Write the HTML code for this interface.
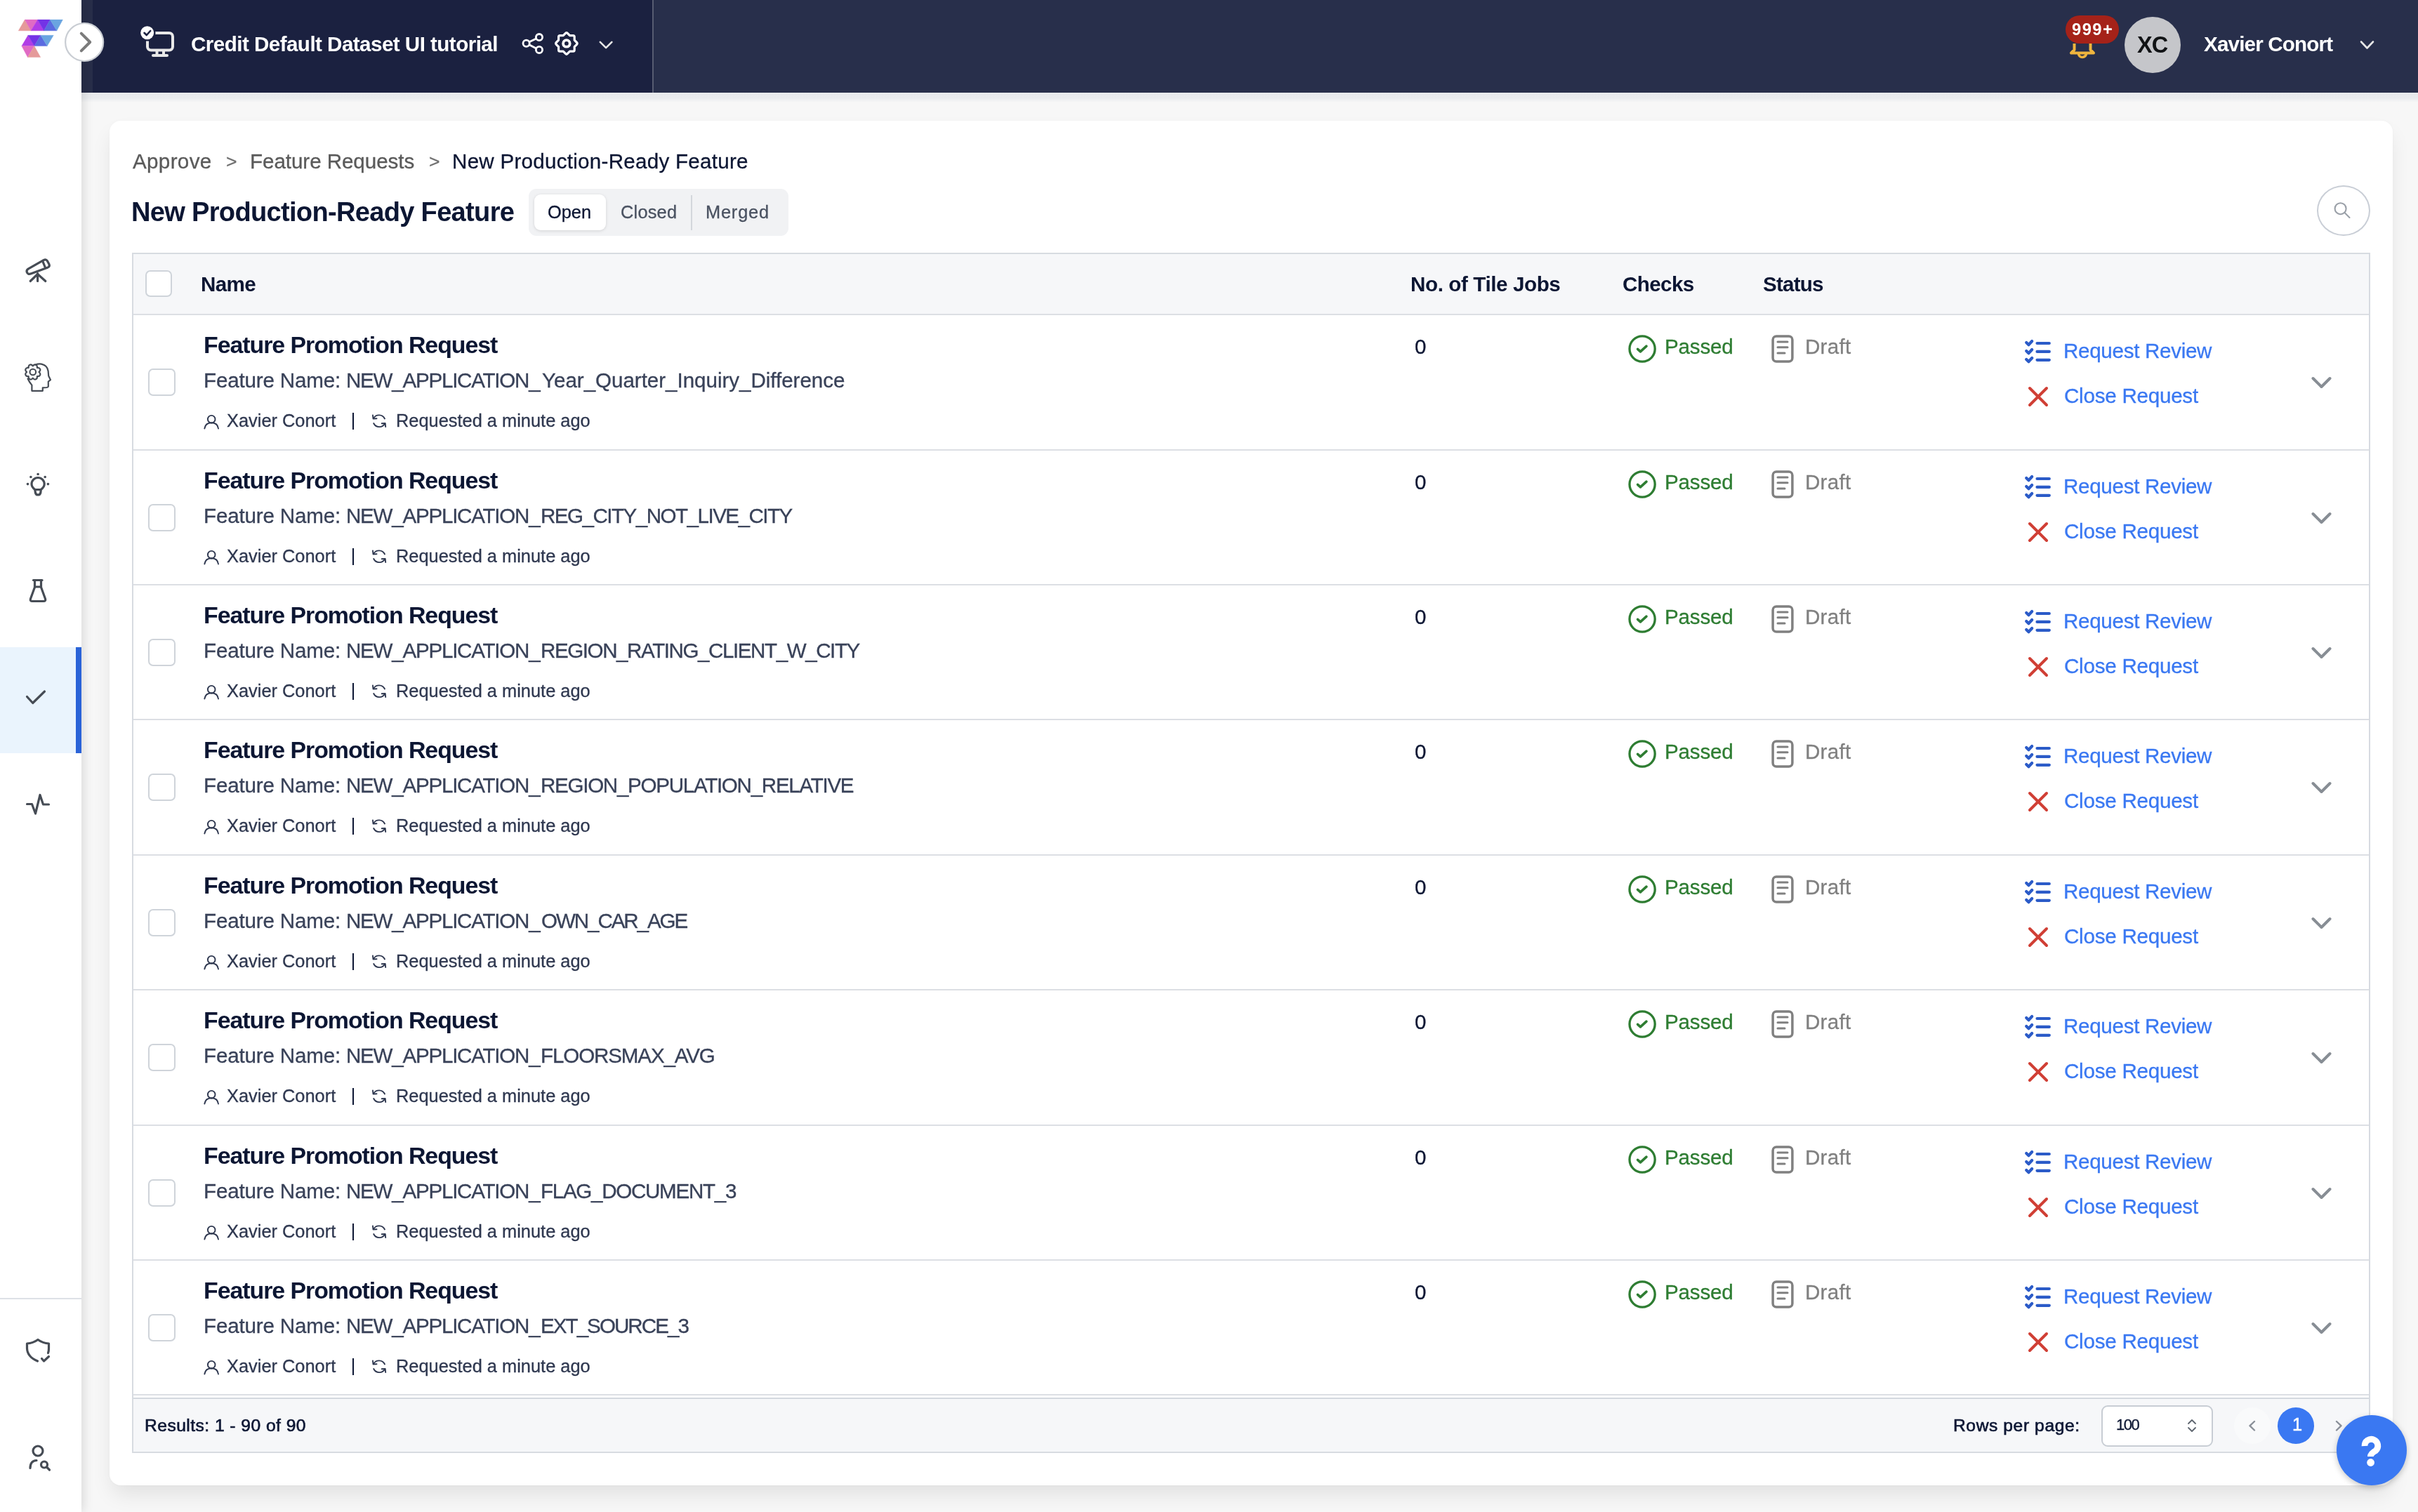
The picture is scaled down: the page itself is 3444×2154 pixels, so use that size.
<!DOCTYPE html><html><head><meta charset="utf-8"><style>
*{margin:0;padding:0;box-sizing:border-box}
html,body{width:3444px;height:2154px;overflow:hidden;background:#f7f7f7;font-family:"Liberation Sans",sans-serif}
.t{position:absolute;white-space:nowrap;will-change:transform}
.a{position:absolute}
svg{position:absolute;left:0;top:0;overflow:visible}
</style></head><body>

<div class="a" style="left:156px;top:172px;width:3252px;height:1944px;background:#fff;border-radius:16px;box-shadow:0 16px 30px -4px rgba(0,0,0,0.095),0 0 4px rgba(0,0,0,0.025)"></div>
<div class="a" style="left:116px;top:132px;width:3328px;height:16px;background:linear-gradient(180deg,#e7e9ec 0px,#e9ebee 8px,#f1f2f3 11px,#f7f7f7 14px)"></div>
<div class="a" style="left:116px;top:0;width:3328px;height:132px;background:#282f4b"></div>
<div class="a" style="left:116px;top:0;width:813px;height:132px;background:#1b2140"></div>
<div class="a" style="left:116px;top:0;width:16px;height:132px;background:#282e49"></div>
<div class="a" style="left:929px;top:0;width:2px;height:132px;background:#575c71"></div>
<div class="a" style="left:0;top:0;width:116px;height:2154px;background:#fff;box-shadow:3px 0 14px rgba(0,0,0,0.12)"></div>
<div class="a" style="left:0;top:922px;width:116px;height:151px;background:#eaf4fd"></div>
<div class="a" style="left:108px;top:922px;width:8px;height:151px;background:#2a63d8"></div>
<div class="a" style="left:0;top:1849px;width:116px;height:2px;background:#dde1e6"></div>
<div class="a" style="left:2942px;top:22px;width:76px;height:40px;border-radius:20px;background:#a52219"></div>
<div class="a" style="left:3026px;top:24px;width:80px;height:80px;border-radius:50%;background:#c5c6ca"></div>
<div class="a" style="left:753px;top:269px;width:370px;height:67px;background:#f1f2f4;border-radius:11px"></div>
<div class="a" style="left:761px;top:277px;width:102px;height:51px;background:#fff;border-radius:9px;box-shadow:0 1px 4px rgba(0,0,0,0.13)"></div>
<div class="a" style="left:984.3px;top:277.5px;width:1.6px;height:50px;background:#d3d7dc"></div>
<div class="a" style="left:3300px;top:264px;width:76px;height:72px;border:2px solid #c9ced6;border-radius:50%"></div>
<div class="a" style="left:188px;top:360px;width:3188px;height:1710px;border:2px solid #d7dbe1;background:#fff"></div>
<div class="a" style="left:190px;top:362px;width:3184px;height:85px;background:#f6f7f9"></div>
<div class="a" style="left:190px;top:447px;width:3184px;height:2px;background:#dcdfe4"></div>
<div class="a" style="left:207px;top:385px;width:38px;height:38px;border:2px solid #cfd4da;border-radius:7px;background:#fff"></div>
<div class="a" style="left:190px;top:640px;width:3184px;height:2px;background:#dcdfe4"></div>
<div class="a" style="left:502px;top:588.00px;width:2.2px;height:23.5px;background:#0c1633"></div>
<div class="a" style="left:210.5px;top:525.00px;width:39px;height:39px;border:2px solid #cfd4da;border-radius:7px;background:#fff"></div>
<div class="a" style="left:190px;top:832px;width:3184px;height:2px;background:#dcdfe4"></div>
<div class="a" style="left:502px;top:781.00px;width:2.2px;height:23.5px;background:#0c1633"></div>
<div class="a" style="left:210.5px;top:718.00px;width:39px;height:39px;border:2px solid #cfd4da;border-radius:7px;background:#fff"></div>
<div class="a" style="left:190px;top:1024px;width:3184px;height:2px;background:#dcdfe4"></div>
<div class="a" style="left:502px;top:973.00px;width:2.2px;height:23.5px;background:#0c1633"></div>
<div class="a" style="left:210.5px;top:910.00px;width:39px;height:39px;border:2px solid #cfd4da;border-radius:7px;background:#fff"></div>
<div class="a" style="left:190px;top:1217px;width:3184px;height:2px;background:#dcdfe4"></div>
<div class="a" style="left:502px;top:1165.00px;width:2.2px;height:23.5px;background:#0c1633"></div>
<div class="a" style="left:210.5px;top:1102.00px;width:39px;height:39px;border:2px solid #cfd4da;border-radius:7px;background:#fff"></div>
<div class="a" style="left:190px;top:1409px;width:3184px;height:2px;background:#dcdfe4"></div>
<div class="a" style="left:502px;top:1358.00px;width:2.2px;height:23.5px;background:#0c1633"></div>
<div class="a" style="left:210.5px;top:1295.00px;width:39px;height:39px;border:2px solid #cfd4da;border-radius:7px;background:#fff"></div>
<div class="a" style="left:190px;top:1602px;width:3184px;height:2px;background:#dcdfe4"></div>
<div class="a" style="left:502px;top:1550.00px;width:2.2px;height:23.5px;background:#0c1633"></div>
<div class="a" style="left:210.5px;top:1487.00px;width:39px;height:39px;border:2px solid #cfd4da;border-radius:7px;background:#fff"></div>
<div class="a" style="left:190px;top:1794px;width:3184px;height:2px;background:#dcdfe4"></div>
<div class="a" style="left:502px;top:1743.00px;width:2.2px;height:23.5px;background:#0c1633"></div>
<div class="a" style="left:210.5px;top:1680.00px;width:39px;height:39px;border:2px solid #cfd4da;border-radius:7px;background:#fff"></div>
<div class="a" style="left:190px;top:1986px;width:3184px;height:2px;background:#dcdfe4"></div>
<div class="a" style="left:502px;top:1935.00px;width:2.2px;height:23.5px;background:#0c1633"></div>
<div class="a" style="left:210.5px;top:1872.00px;width:39px;height:39px;border:2px solid #cfd4da;border-radius:7px;background:#fff"></div>
<div class="a" style="left:190px;top:1991px;width:3184px;height:2px;background:#d3d8df"></div><div class="a" style="left:190px;top:1993px;width:3184px;height:75px;background:#f6f7f9"></div>
<div class="a" style="left:2992.5px;top:2001.5px;width:159px;height:59px;border:2px solid #c8cdd4;border-radius:9px;background:#fff"></div>
<div class="a" style="left:3182px;top:2005px;width:52px;height:52px;border-radius:50%;background:#f9fafb;opacity:1"></div>
<div class="a" style="left:3244px;top:2005px;width:52px;height:52px;border-radius:50%;background:#3a78f2"></div>
<div class="a" style="left:3328px;top:2016px;width:100px;height:100px;border-radius:50%;background:#3a78f2;box-shadow:0 3px 8px rgba(0,0,0,0.22)"></div>
<svg width="3444" height="2154" viewBox="0 0 3444 2154"><polygon points="26.25,43.8 35.3,28.1 44.1,43.8" fill="#e59a9a" stroke="#e59a9a" stroke-width="0.4"/><polygon points="35.3,28.1 53.6,28.1 44.1,43.8" fill="#e06ac4" stroke="#e06ac4" stroke-width="0.4"/><polygon points="44.1,43.8 53.6,28.1 62.6,43.8" fill="#b03de6" stroke="#b03de6" stroke-width="0.4"/><polygon points="53.6,28.1 71.4,28.1 62.6,43.8" fill="#7333e6" stroke="#7333e6" stroke-width="0.4"/><polygon points="62.6,43.8 71.4,28.1 80.9,43.8" fill="#5a6be0" stroke="#5a6be0" stroke-width="0.4"/><polygon points="71.4,28.1 89.4,28.1 80.9,43.8" fill="#6aa5e0" stroke="#6aa5e0" stroke-width="0.4"/><polygon points="30.9,65.6 39.9,50.3 48.9,65.6" fill="#b03de6" stroke="#b03de6" stroke-width="0.4"/><polygon points="39.9,50.3 58,50.3 48.9,65.6" fill="#7333e6" stroke="#7333e6" stroke-width="0.4"/><polygon points="48.9,65.6 58,50.3 67.2,65.6" fill="#5a6be0" stroke="#5a6be0" stroke-width="0.4"/><polygon points="58,50.3 76.25,50.3 67.2,65.6" fill="#6aa5e0" stroke="#6aa5e0" stroke-width="0.4"/><polygon points="30.9,65.6 48.9,65.6 39.4,81.6" fill="#e06ac4" stroke="#e06ac4" stroke-width="0.4"/><polygon points="48.9,65.6 57.7,81.6 39.4,81.6" fill="#e59a9a" stroke="#e59a9a" stroke-width="0.4"/><circle cx="120.1" cy="60" r="27" fill="#fff" stroke="#c9cdd3" stroke-width="2.2"/><polyline points="115.8,47.6 128.2,60 115.8,72.4" fill="none" stroke="#7b7b7b" stroke-width="4" stroke-linecap="round" stroke-linejoin="round"/><rect x="210" y="47" width="36" height="24.5" rx="5" fill="none" stroke="#e8e8e8" stroke-width="4"/><rect x="221.5" y="71" width="4" height="7" fill="#e8e8e8"/><rect x="231" y="71" width="4" height="7" fill="#e8e8e8"/><rect x="216" y="77" width="24" height="4" rx="2" fill="#e8e8e8"/><circle cx="209.7" cy="46.8" r="11.8" fill="#1b2140"/><circle cx="209.7" cy="46.8" r="9.5" fill="#fff"/><polyline points="205.5,46.8 208.8,50 214.2,44" fill="none" stroke="#1b2140" stroke-width="2.6" stroke-linecap="round" stroke-linejoin="round"/><g fill="none" stroke="#fff" stroke-width="2.8"><circle cx="749.6" cy="61.8" r="4.6"/><circle cx="768" cy="53.1" r="4.6"/><circle cx="768" cy="71" r="4.6"/><line x1="753.8" y1="59.8" x2="763.8" y2="55.1"/><line x1="753.8" y1="63.8" x2="763.8" y2="69"/></g><path d="M805.50,47.32 Q806.90,45.92 808.30,47.32 L811.58,50.60 L816.21,50.60 Q818.20,50.60 818.20,52.59 L818.20,57.22 L821.48,60.50 Q822.88,61.90 821.48,63.30 L818.20,66.58 L818.20,71.21 Q818.20,73.20 816.21,73.20 L811.58,73.20 L808.30,76.48 Q806.90,77.88 805.50,76.48 L802.22,73.20 L797.59,73.20 Q795.60,73.20 795.60,71.21 L795.60,66.58 L792.32,63.30 Q790.92,61.90 792.32,60.50 L795.60,57.22 L795.60,52.59 Q795.60,50.60 797.59,50.60 L802.22,50.60 Z" fill="none" stroke="#fff" stroke-width="3.2" stroke-linejoin="round"/><circle cx="806.9" cy="61.9" r="4.8" fill="none" stroke="#fff" stroke-width="3.8"/><polyline points="854.8,59.8 863.1,68.2 871.4,59.8" fill="none" stroke="#e6e6e6" stroke-width="2.6" stroke-linecap="round" stroke-linejoin="round"/><path d="M2954.5,62 V71 L2950,75.5 H2982 L2977.5,71 V62" fill="none" stroke="#efb53e" stroke-width="4" stroke-linejoin="round"/><path d="M2960.5,76 A5.5,5.5 0 0 0 2971.5,76" fill="none" stroke="#efb53e" stroke-width="3.6"/><polyline points="3363,59.5 3371.5,68.5 3380,59.5" fill="none" stroke="#e6e6e6" stroke-width="2.6" stroke-linecap="round" stroke-linejoin="round"/><g fill="none" stroke="#464c55" stroke-width="3.2" stroke-linecap="round" stroke-linejoin="round"><path d="M40.5,382.8 L62,370.6 Q65.5,368.6 67.3,371.6 L70,376.6 Q71.2,379.6 68.2,380.9 L44.5,389.8 Q39.5,391.6 38.2,387.6 Q37.4,384.6 40.5,382.8 Z"/><line x1="60.8" y1="372.2" x2="64.6" y2="381.5"/><line x1="53.6" y1="389.5" x2="53.6" y2="400.5"/><line x1="53.6" y1="390.5" x2="43.2" y2="400.5"/><line x1="53.6" y1="390.5" x2="64.8" y2="400.5"/></g><g fill="none" stroke="#464c55" stroke-width="2.2" stroke-linejoin="round" stroke-linecap="round"><path d="M50.5,519.5 Q55,517.8 59,518.6 Q67.5,520.5 68.6,528.5 L69.2,535.5 L72,541.2 L68.8,543.6 L68.8,550.6 Q68.6,551.8 66.5,552 L60.8,552.4 L60.8,556.8 L45.4,556.8 L45.4,548.6 Q41.5,544 39.6,539.5"/></g><path d="M46.80,521.40 Q48.76,518.75 51.09,519.65 Q53.37,520.65 52.88,523.92 Q56.15,523.43 57.15,525.71 Q58.05,528.04 55.40,530.00 Q58.05,531.96 57.15,534.29 Q56.15,536.57 52.88,536.08 Q53.37,539.35 51.09,540.35 Q48.76,541.25 46.80,538.60 Q44.84,541.25 42.51,540.35 Q40.23,539.35 40.72,536.08 Q37.45,536.57 36.45,534.29 Q35.55,531.96 38.20,530.00 Q35.55,528.04 36.45,525.71 Q37.45,523.43 40.72,523.92 Q40.23,520.65 42.51,519.65 Q44.84,518.75 46.80,521.40 Z" fill="none" stroke="#464c55" stroke-width="2.1" stroke-linejoin="round"/><circle cx="46.8" cy="530" r="4.3" fill="none" stroke="#464c55" stroke-width="2.1"/><g fill="none" stroke="#464c55" stroke-width="3.2" stroke-linecap="round" stroke-linejoin="round"><path d="M49.8,697.5 Q45,694 45,689.6 A9.1,9.1 0 0 1 63.2,689.6 Q63.2,694 58.3,697.5 L57.8,702 Q57,705 54.1,705 Q51.2,705 50.4,702 Z"/><line x1="50" y1="697.5" x2="58" y2="697.5"/></g><circle cx="54.1" cy="675.5" r="1.8" fill="#464c55"/><circle cx="43.9" cy="679.5" r="1.8" fill="#464c55"/><circle cx="64.2" cy="679.5" r="1.8" fill="#464c55"/><circle cx="39.5" cy="689.6" r="1.8" fill="#464c55"/><circle cx="68.4" cy="689.6" r="1.8" fill="#464c55"/><g fill="none" stroke="#464c55" stroke-width="3.2" stroke-linecap="round" stroke-linejoin="round"><line x1="47.5" y1="826.5" x2="60" y2="826.5"/><path d="M49.5,826.5 V836.5 L43.5,853 Q42.5,856.5 46,856.5 H62 Q65.5,856.5 64.5,853 L58.5,836.5 V826.5"/><line x1="49.5" y1="836" x2="58.5" y2="836"/></g><polyline points="38.5,992.5 46.7,1001.5 63.5,985" fill="none" stroke="#464c55" stroke-width="3.2" stroke-linecap="round" stroke-linejoin="round"/><polyline points="38.5,1145.5 45.5,1145.5 50.5,1159 57,1132.5 61.5,1146 69.5,1146" fill="none" stroke="#464c55" stroke-width="3.2" stroke-linecap="round" stroke-linejoin="round"/><g fill="none" stroke="#464c55" stroke-width="3.2" stroke-linecap="round" stroke-linejoin="round"><path d="M53.5,1939 Q39,1933 38.5,1921 V1914 Q47,1913.5 54,1908.5 Q61,1913.5 69.5,1914 V1921 Q69.5,1925 68.5,1927.5"/><polyline points="59.5,1935.5 62.5,1939 69.5,1932.5"/></g><g fill="none" stroke="#464c55" stroke-width="3.2" stroke-linecap="round" stroke-linejoin="round"><circle cx="54" cy="2067" r="7"/><path d="M43,2091.5 Q43,2081 52,2080.5"/><circle cx="63" cy="2086.5" r="4.5"/><line x1="66.5" y1="2090" x2="70.5" y2="2094"/></g><g fill="none" stroke="#9aa0a8" stroke-width="2.1" stroke-linecap="round"><circle cx="3333.6" cy="297.2" r="8"/><line x1="3339.5" y1="303" x2="3346.5" y2="310"/></g><g fill="none" stroke="#2f3850" stroke-width="1.9" stroke-linecap="round"><circle cx="301.2" cy="597.20" r="5.3"/><path d="M291.3,610.50 Q292.5,602.50 301.2,602.30 Q310,602.50 311,610.50"/></g><g fill="none" stroke="#2f3850" stroke-width="1.9" stroke-linecap="round" stroke-linejoin="round"><path d="M532,596.00 A9,9 0 0 1 548,596.50"/><path d="M548.2,603.50 A9,9 0 0 1 532.2,603.00"/><polyline points="531,591.50 531.5,596.50 536.5,596.20"/><polyline points="549.2,608.00 548.7,603.00 543.7,603.30"/></g><circle cx="2339.1" cy="497.00" r="18.1" fill="none" stroke="#2e7d32" stroke-width="3.3"/><polyline points="2332.6,497.30 2336.5,500.80 2345,493.20" fill="none" stroke="#2e7d32" stroke-width="3.6" stroke-linecap="round" stroke-linejoin="round"/><rect x="2525.1" y="479.00" width="27.8" height="36" rx="5" fill="none" stroke="#808080" stroke-width="3.5"/><g stroke="#808080" stroke-width="3" stroke-linecap="round"><line x1="2532" y1="487.00" x2="2546" y2="487.00"/><line x1="2532" y1="494.80" x2="2546" y2="494.80"/><line x1="2532" y1="503.00" x2="2542" y2="503.00"/></g><g fill="none" stroke="#2b5bc8" stroke-width="4.2" stroke-linecap="round" stroke-linejoin="round"><polyline points="2886.2,488.00 2889.5,491.20 2894.2,486.00"/><line x1="2901.5" y1="489.00" x2="2918.8" y2="489.00"/><polyline points="2886.2,500.00 2889.5,503.20 2894.2,498.00"/><line x1="2901.5" y1="500.90" x2="2918.8" y2="500.90"/><polyline points="2886.2,512.00 2889.5,515.20 2894.2,510.00"/><line x1="2901.5" y1="512.80" x2="2918.8" y2="512.80"/></g><g stroke="#d03f35" stroke-width="4" stroke-linecap="round"><line x1="2891" y1="553.00" x2="2915" y2="577.00"/><line x1="2915" y1="553.00" x2="2891" y2="577.00"/></g><polyline points="3294.5,539.00 3306.5,551.00 3318.5,539.00" fill="none" stroke="#878d94" stroke-width="4" stroke-linecap="round" stroke-linejoin="round"/><g fill="none" stroke="#2f3850" stroke-width="1.9" stroke-linecap="round"><circle cx="301.2" cy="790.20" r="5.3"/><path d="M291.3,803.50 Q292.5,795.50 301.2,795.30 Q310,795.50 311,803.50"/></g><g fill="none" stroke="#2f3850" stroke-width="1.9" stroke-linecap="round" stroke-linejoin="round"><path d="M532,789.00 A9,9 0 0 1 548,789.50"/><path d="M548.2,796.50 A9,9 0 0 1 532.2,796.00"/><polyline points="531,784.50 531.5,789.50 536.5,789.20"/><polyline points="549.2,801.00 548.7,796.00 543.7,796.30"/></g><circle cx="2339.1" cy="690.00" r="18.1" fill="none" stroke="#2e7d32" stroke-width="3.3"/><polyline points="2332.6,690.30 2336.5,693.80 2345,686.20" fill="none" stroke="#2e7d32" stroke-width="3.6" stroke-linecap="round" stroke-linejoin="round"/><rect x="2525.1" y="672.00" width="27.8" height="36" rx="5" fill="none" stroke="#808080" stroke-width="3.5"/><g stroke="#808080" stroke-width="3" stroke-linecap="round"><line x1="2532" y1="680.00" x2="2546" y2="680.00"/><line x1="2532" y1="687.80" x2="2546" y2="687.80"/><line x1="2532" y1="696.00" x2="2542" y2="696.00"/></g><g fill="none" stroke="#2b5bc8" stroke-width="4.2" stroke-linecap="round" stroke-linejoin="round"><polyline points="2886.2,681.00 2889.5,684.20 2894.2,679.00"/><line x1="2901.5" y1="682.00" x2="2918.8" y2="682.00"/><polyline points="2886.2,693.00 2889.5,696.20 2894.2,691.00"/><line x1="2901.5" y1="693.90" x2="2918.8" y2="693.90"/><polyline points="2886.2,705.00 2889.5,708.20 2894.2,703.00"/><line x1="2901.5" y1="705.80" x2="2918.8" y2="705.80"/></g><g stroke="#d03f35" stroke-width="4" stroke-linecap="round"><line x1="2891" y1="746.00" x2="2915" y2="770.00"/><line x1="2915" y1="746.00" x2="2891" y2="770.00"/></g><polyline points="3294.5,732.00 3306.5,744.00 3318.5,732.00" fill="none" stroke="#878d94" stroke-width="4" stroke-linecap="round" stroke-linejoin="round"/><g fill="none" stroke="#2f3850" stroke-width="1.9" stroke-linecap="round"><circle cx="301.2" cy="982.20" r="5.3"/><path d="M291.3,995.50 Q292.5,987.50 301.2,987.30 Q310,987.50 311,995.50"/></g><g fill="none" stroke="#2f3850" stroke-width="1.9" stroke-linecap="round" stroke-linejoin="round"><path d="M532,981.00 A9,9 0 0 1 548,981.50"/><path d="M548.2,988.50 A9,9 0 0 1 532.2,988.00"/><polyline points="531,976.50 531.5,981.50 536.5,981.20"/><polyline points="549.2,993.00 548.7,988.00 543.7,988.30"/></g><circle cx="2339.1" cy="882.00" r="18.1" fill="none" stroke="#2e7d32" stroke-width="3.3"/><polyline points="2332.6,882.30 2336.5,885.80 2345,878.20" fill="none" stroke="#2e7d32" stroke-width="3.6" stroke-linecap="round" stroke-linejoin="round"/><rect x="2525.1" y="864.00" width="27.8" height="36" rx="5" fill="none" stroke="#808080" stroke-width="3.5"/><g stroke="#808080" stroke-width="3" stroke-linecap="round"><line x1="2532" y1="872.00" x2="2546" y2="872.00"/><line x1="2532" y1="879.80" x2="2546" y2="879.80"/><line x1="2532" y1="888.00" x2="2542" y2="888.00"/></g><g fill="none" stroke="#2b5bc8" stroke-width="4.2" stroke-linecap="round" stroke-linejoin="round"><polyline points="2886.2,873.00 2889.5,876.20 2894.2,871.00"/><line x1="2901.5" y1="874.00" x2="2918.8" y2="874.00"/><polyline points="2886.2,885.00 2889.5,888.20 2894.2,883.00"/><line x1="2901.5" y1="885.90" x2="2918.8" y2="885.90"/><polyline points="2886.2,897.00 2889.5,900.20 2894.2,895.00"/><line x1="2901.5" y1="897.80" x2="2918.8" y2="897.80"/></g><g stroke="#d03f35" stroke-width="4" stroke-linecap="round"><line x1="2891" y1="938.00" x2="2915" y2="962.00"/><line x1="2915" y1="938.00" x2="2891" y2="962.00"/></g><polyline points="3294.5,924.00 3306.5,936.00 3318.5,924.00" fill="none" stroke="#878d94" stroke-width="4" stroke-linecap="round" stroke-linejoin="round"/><g fill="none" stroke="#2f3850" stroke-width="1.9" stroke-linecap="round"><circle cx="301.2" cy="1174.20" r="5.3"/><path d="M291.3,1187.50 Q292.5,1179.50 301.2,1179.30 Q310,1179.50 311,1187.50"/></g><g fill="none" stroke="#2f3850" stroke-width="1.9" stroke-linecap="round" stroke-linejoin="round"><path d="M532,1173.00 A9,9 0 0 1 548,1173.50"/><path d="M548.2,1180.50 A9,9 0 0 1 532.2,1180.00"/><polyline points="531,1168.50 531.5,1173.50 536.5,1173.20"/><polyline points="549.2,1185.00 548.7,1180.00 543.7,1180.30"/></g><circle cx="2339.1" cy="1074.00" r="18.1" fill="none" stroke="#2e7d32" stroke-width="3.3"/><polyline points="2332.6,1074.30 2336.5,1077.80 2345,1070.20" fill="none" stroke="#2e7d32" stroke-width="3.6" stroke-linecap="round" stroke-linejoin="round"/><rect x="2525.1" y="1056.00" width="27.8" height="36" rx="5" fill="none" stroke="#808080" stroke-width="3.5"/><g stroke="#808080" stroke-width="3" stroke-linecap="round"><line x1="2532" y1="1064.00" x2="2546" y2="1064.00"/><line x1="2532" y1="1071.80" x2="2546" y2="1071.80"/><line x1="2532" y1="1080.00" x2="2542" y2="1080.00"/></g><g fill="none" stroke="#2b5bc8" stroke-width="4.2" stroke-linecap="round" stroke-linejoin="round"><polyline points="2886.2,1065.00 2889.5,1068.20 2894.2,1063.00"/><line x1="2901.5" y1="1066.00" x2="2918.8" y2="1066.00"/><polyline points="2886.2,1077.00 2889.5,1080.20 2894.2,1075.00"/><line x1="2901.5" y1="1077.90" x2="2918.8" y2="1077.90"/><polyline points="2886.2,1089.00 2889.5,1092.20 2894.2,1087.00"/><line x1="2901.5" y1="1089.80" x2="2918.8" y2="1089.80"/></g><g stroke="#d03f35" stroke-width="4" stroke-linecap="round"><line x1="2891" y1="1130.00" x2="2915" y2="1154.00"/><line x1="2915" y1="1130.00" x2="2891" y2="1154.00"/></g><polyline points="3294.5,1116.00 3306.5,1128.00 3318.5,1116.00" fill="none" stroke="#878d94" stroke-width="4" stroke-linecap="round" stroke-linejoin="round"/><g fill="none" stroke="#2f3850" stroke-width="1.9" stroke-linecap="round"><circle cx="301.2" cy="1367.20" r="5.3"/><path d="M291.3,1380.50 Q292.5,1372.50 301.2,1372.30 Q310,1372.50 311,1380.50"/></g><g fill="none" stroke="#2f3850" stroke-width="1.9" stroke-linecap="round" stroke-linejoin="round"><path d="M532,1366.00 A9,9 0 0 1 548,1366.50"/><path d="M548.2,1373.50 A9,9 0 0 1 532.2,1373.00"/><polyline points="531,1361.50 531.5,1366.50 536.5,1366.20"/><polyline points="549.2,1378.00 548.7,1373.00 543.7,1373.30"/></g><circle cx="2339.1" cy="1267.00" r="18.1" fill="none" stroke="#2e7d32" stroke-width="3.3"/><polyline points="2332.6,1267.30 2336.5,1270.80 2345,1263.20" fill="none" stroke="#2e7d32" stroke-width="3.6" stroke-linecap="round" stroke-linejoin="round"/><rect x="2525.1" y="1249.00" width="27.8" height="36" rx="5" fill="none" stroke="#808080" stroke-width="3.5"/><g stroke="#808080" stroke-width="3" stroke-linecap="round"><line x1="2532" y1="1257.00" x2="2546" y2="1257.00"/><line x1="2532" y1="1264.80" x2="2546" y2="1264.80"/><line x1="2532" y1="1273.00" x2="2542" y2="1273.00"/></g><g fill="none" stroke="#2b5bc8" stroke-width="4.2" stroke-linecap="round" stroke-linejoin="round"><polyline points="2886.2,1258.00 2889.5,1261.20 2894.2,1256.00"/><line x1="2901.5" y1="1259.00" x2="2918.8" y2="1259.00"/><polyline points="2886.2,1270.00 2889.5,1273.20 2894.2,1268.00"/><line x1="2901.5" y1="1270.90" x2="2918.8" y2="1270.90"/><polyline points="2886.2,1282.00 2889.5,1285.20 2894.2,1280.00"/><line x1="2901.5" y1="1282.80" x2="2918.8" y2="1282.80"/></g><g stroke="#d03f35" stroke-width="4" stroke-linecap="round"><line x1="2891" y1="1323.00" x2="2915" y2="1347.00"/><line x1="2915" y1="1323.00" x2="2891" y2="1347.00"/></g><polyline points="3294.5,1309.00 3306.5,1321.00 3318.5,1309.00" fill="none" stroke="#878d94" stroke-width="4" stroke-linecap="round" stroke-linejoin="round"/><g fill="none" stroke="#2f3850" stroke-width="1.9" stroke-linecap="round"><circle cx="301.2" cy="1559.20" r="5.3"/><path d="M291.3,1572.50 Q292.5,1564.50 301.2,1564.30 Q310,1564.50 311,1572.50"/></g><g fill="none" stroke="#2f3850" stroke-width="1.9" stroke-linecap="round" stroke-linejoin="round"><path d="M532,1558.00 A9,9 0 0 1 548,1558.50"/><path d="M548.2,1565.50 A9,9 0 0 1 532.2,1565.00"/><polyline points="531,1553.50 531.5,1558.50 536.5,1558.20"/><polyline points="549.2,1570.00 548.7,1565.00 543.7,1565.30"/></g><circle cx="2339.1" cy="1459.00" r="18.1" fill="none" stroke="#2e7d32" stroke-width="3.3"/><polyline points="2332.6,1459.30 2336.5,1462.80 2345,1455.20" fill="none" stroke="#2e7d32" stroke-width="3.6" stroke-linecap="round" stroke-linejoin="round"/><rect x="2525.1" y="1441.00" width="27.8" height="36" rx="5" fill="none" stroke="#808080" stroke-width="3.5"/><g stroke="#808080" stroke-width="3" stroke-linecap="round"><line x1="2532" y1="1449.00" x2="2546" y2="1449.00"/><line x1="2532" y1="1456.80" x2="2546" y2="1456.80"/><line x1="2532" y1="1465.00" x2="2542" y2="1465.00"/></g><g fill="none" stroke="#2b5bc8" stroke-width="4.2" stroke-linecap="round" stroke-linejoin="round"><polyline points="2886.2,1450.00 2889.5,1453.20 2894.2,1448.00"/><line x1="2901.5" y1="1451.00" x2="2918.8" y2="1451.00"/><polyline points="2886.2,1462.00 2889.5,1465.20 2894.2,1460.00"/><line x1="2901.5" y1="1462.90" x2="2918.8" y2="1462.90"/><polyline points="2886.2,1474.00 2889.5,1477.20 2894.2,1472.00"/><line x1="2901.5" y1="1474.80" x2="2918.8" y2="1474.80"/></g><g stroke="#d03f35" stroke-width="4" stroke-linecap="round"><line x1="2891" y1="1515.00" x2="2915" y2="1539.00"/><line x1="2915" y1="1515.00" x2="2891" y2="1539.00"/></g><polyline points="3294.5,1501.00 3306.5,1513.00 3318.5,1501.00" fill="none" stroke="#878d94" stroke-width="4" stroke-linecap="round" stroke-linejoin="round"/><g fill="none" stroke="#2f3850" stroke-width="1.9" stroke-linecap="round"><circle cx="301.2" cy="1752.20" r="5.3"/><path d="M291.3,1765.50 Q292.5,1757.50 301.2,1757.30 Q310,1757.50 311,1765.50"/></g><g fill="none" stroke="#2f3850" stroke-width="1.9" stroke-linecap="round" stroke-linejoin="round"><path d="M532,1751.00 A9,9 0 0 1 548,1751.50"/><path d="M548.2,1758.50 A9,9 0 0 1 532.2,1758.00"/><polyline points="531,1746.50 531.5,1751.50 536.5,1751.20"/><polyline points="549.2,1763.00 548.7,1758.00 543.7,1758.30"/></g><circle cx="2339.1" cy="1652.00" r="18.1" fill="none" stroke="#2e7d32" stroke-width="3.3"/><polyline points="2332.6,1652.30 2336.5,1655.80 2345,1648.20" fill="none" stroke="#2e7d32" stroke-width="3.6" stroke-linecap="round" stroke-linejoin="round"/><rect x="2525.1" y="1634.00" width="27.8" height="36" rx="5" fill="none" stroke="#808080" stroke-width="3.5"/><g stroke="#808080" stroke-width="3" stroke-linecap="round"><line x1="2532" y1="1642.00" x2="2546" y2="1642.00"/><line x1="2532" y1="1649.80" x2="2546" y2="1649.80"/><line x1="2532" y1="1658.00" x2="2542" y2="1658.00"/></g><g fill="none" stroke="#2b5bc8" stroke-width="4.2" stroke-linecap="round" stroke-linejoin="round"><polyline points="2886.2,1643.00 2889.5,1646.20 2894.2,1641.00"/><line x1="2901.5" y1="1644.00" x2="2918.8" y2="1644.00"/><polyline points="2886.2,1655.00 2889.5,1658.20 2894.2,1653.00"/><line x1="2901.5" y1="1655.90" x2="2918.8" y2="1655.90"/><polyline points="2886.2,1667.00 2889.5,1670.20 2894.2,1665.00"/><line x1="2901.5" y1="1667.80" x2="2918.8" y2="1667.80"/></g><g stroke="#d03f35" stroke-width="4" stroke-linecap="round"><line x1="2891" y1="1708.00" x2="2915" y2="1732.00"/><line x1="2915" y1="1708.00" x2="2891" y2="1732.00"/></g><polyline points="3294.5,1694.00 3306.5,1706.00 3318.5,1694.00" fill="none" stroke="#878d94" stroke-width="4" stroke-linecap="round" stroke-linejoin="round"/><g fill="none" stroke="#2f3850" stroke-width="1.9" stroke-linecap="round"><circle cx="301.2" cy="1944.20" r="5.3"/><path d="M291.3,1957.50 Q292.5,1949.50 301.2,1949.30 Q310,1949.50 311,1957.50"/></g><g fill="none" stroke="#2f3850" stroke-width="1.9" stroke-linecap="round" stroke-linejoin="round"><path d="M532,1943.00 A9,9 0 0 1 548,1943.50"/><path d="M548.2,1950.50 A9,9 0 0 1 532.2,1950.00"/><polyline points="531,1938.50 531.5,1943.50 536.5,1943.20"/><polyline points="549.2,1955.00 548.7,1950.00 543.7,1950.30"/></g><circle cx="2339.1" cy="1844.00" r="18.1" fill="none" stroke="#2e7d32" stroke-width="3.3"/><polyline points="2332.6,1844.30 2336.5,1847.80 2345,1840.20" fill="none" stroke="#2e7d32" stroke-width="3.6" stroke-linecap="round" stroke-linejoin="round"/><rect x="2525.1" y="1826.00" width="27.8" height="36" rx="5" fill="none" stroke="#808080" stroke-width="3.5"/><g stroke="#808080" stroke-width="3" stroke-linecap="round"><line x1="2532" y1="1834.00" x2="2546" y2="1834.00"/><line x1="2532" y1="1841.80" x2="2546" y2="1841.80"/><line x1="2532" y1="1850.00" x2="2542" y2="1850.00"/></g><g fill="none" stroke="#2b5bc8" stroke-width="4.2" stroke-linecap="round" stroke-linejoin="round"><polyline points="2886.2,1835.00 2889.5,1838.20 2894.2,1833.00"/><line x1="2901.5" y1="1836.00" x2="2918.8" y2="1836.00"/><polyline points="2886.2,1847.00 2889.5,1850.20 2894.2,1845.00"/><line x1="2901.5" y1="1847.90" x2="2918.8" y2="1847.90"/><polyline points="2886.2,1859.00 2889.5,1862.20 2894.2,1857.00"/><line x1="2901.5" y1="1859.80" x2="2918.8" y2="1859.80"/></g><g stroke="#d03f35" stroke-width="4" stroke-linecap="round"><line x1="2891" y1="1900.00" x2="2915" y2="1924.00"/><line x1="2915" y1="1900.00" x2="2891" y2="1924.00"/></g><polyline points="3294.5,1886.00 3306.5,1898.00 3318.5,1886.00" fill="none" stroke="#878d94" stroke-width="4" stroke-linecap="round" stroke-linejoin="round"/><g fill="none" stroke="#5f6670" stroke-width="1.8" stroke-linecap="round" stroke-linejoin="round"><polyline points="3117,2028 3122,2023 3127,2028"/><polyline points="3117,2034 3122,2039 3127,2034"/></g><polyline points="3211,2025 3204.5,2031.2 3211,2037.5" fill="none" stroke="#8a9099" stroke-width="2.4" stroke-linecap="round" stroke-linejoin="round"/><polyline points="3328,2025 3334.5,2031.2 3328,2037.5" fill="none" stroke="#8a9099" stroke-width="2.4" stroke-linecap="round" stroke-linejoin="round"/><path d="M3368,2060 A9.4,9.4 0 1 1 3383.8,2066.6 Q3376.4,2070.6 3376.4,2075" fill="none" stroke="#fff" stroke-width="8.8"/><circle cx="3376.6" cy="2083.5" r="5.4" fill="#fff"/></svg>
<div class="t" id="hdr_title" style="left:272.10px;top:48.04px;font-size:29.6px;line-height:29.6px;font-weight:700;color:#ffffff;letter-spacing:-0.545px;">Credit Default Dataset UI tutorial</div>
<div class="t" id="hdr_user" style="left:3139.40px;top:48.14px;font-size:29.6px;line-height:29.6px;font-weight:700;color:#ffffff;letter-spacing:-0.833px;">Xavier Conort</div>
<div class="t" id="hdr_xc" style="left:3044.30px;top:47.58px;font-size:32.5px;line-height:32.5px;font-weight:700;color:#111315;letter-spacing:-1.000px;">XC</div>
<div class="t" id="badge" style="left:2951.00px;top:30.93px;font-size:23.7px;line-height:23.7px;font-weight:700;color:#ffffff;letter-spacing:1.467px;">999+</div>
<div class="t" id="bc1" style="left:188.90px;top:214.94px;font-size:29.6px;line-height:29.6px;font-weight:400;color:#5a5a5a;letter-spacing:0.333px;-webkit-text-stroke-width:0.3px;">Approve</div>
<div class="t" id="bc2" style="left:321.90px;top:217.06px;font-size:26.5px;line-height:26.5px;font-weight:400;color:#6f6f6f;letter-spacing:0.000px;-webkit-text-stroke-width:0.3px;">&gt;</div>
<div class="t" id="bc3" style="left:356.00px;top:214.94px;font-size:29.6px;line-height:29.6px;font-weight:400;color:#5a5a5a;letter-spacing:-0.067px;-webkit-text-stroke-width:0.3px;">Feature Requests</div>
<div class="t" id="bc4" style="left:611.00px;top:217.06px;font-size:26.5px;line-height:26.5px;font-weight:400;color:#6f6f6f;letter-spacing:0.000px;-webkit-text-stroke-width:0.3px;">&gt;</div>
<div class="t" id="bc5" style="left:644.00px;top:214.94px;font-size:29.6px;line-height:29.6px;font-weight:400;color:#0c1633;letter-spacing:0.259px;-webkit-text-stroke-width:0.3px;">New Production-Ready Feature</div>
<div class="t" id="title" style="left:186.50px;top:282.84px;font-size:38.1px;line-height:38.1px;font-weight:700;color:#0c1633;letter-spacing:-0.704px;">New Production-Ready Feature</div>
<div class="t" id="tab_open" style="left:780.40px;top:289.89px;font-size:25.4px;line-height:25.4px;font-weight:400;color:#0c1633;letter-spacing:0.000px;-webkit-text-stroke-width:0.3px;">Open</div>
<div class="t" id="tab_closed" style="left:884.20px;top:289.89px;font-size:25.4px;line-height:25.4px;font-weight:400;color:#4a5261;letter-spacing:0.200px;-webkit-text-stroke-width:0.3px;">Closed</div>
<div class="t" id="tab_merged" style="left:1005.00px;top:289.89px;font-size:25.4px;line-height:25.4px;font-weight:400;color:#4a5261;letter-spacing:0.800px;-webkit-text-stroke-width:0.3px;">Merged</div>
<div class="t" id="th_name" style="left:285.90px;top:389.84px;font-size:29.6px;line-height:29.6px;font-weight:700;color:#0c1633;letter-spacing:-0.667px;">Name</div>
<div class="t" id="th_jobs" style="left:2009.40px;top:390.14px;font-size:29.6px;line-height:29.6px;font-weight:700;color:#0c1633;letter-spacing:-0.400px;">No. of Tile Jobs</div>
<div class="t" id="th_checks" style="left:2310.90px;top:390.14px;font-size:29.6px;line-height:29.6px;font-weight:700;color:#0c1633;letter-spacing:-0.600px;">Checks</div>
<div class="t" id="th_status" style="left:2510.80px;top:390.14px;font-size:29.6px;line-height:29.6px;font-weight:700;color:#0c1633;letter-spacing:-0.800px;">Status</div>
<div class="t" id="r0_title" style="left:289.90px;top:475.40px;font-size:33.9px;line-height:33.9px;font-weight:700;color:#0c1633;letter-spacing:-1.042px;">Feature Promotion Request</div>
<div class="t" id="r0_flabel" style="left:290.10px;top:526.94px;font-size:29.6px;line-height:29.6px;font-weight:400;color:#394259;letter-spacing:-0.183px;-webkit-text-stroke-width:0.3px;">Feature Name:</div>
<div class="t" id="r0_fpre" style="left:493.00px;top:526.94px;font-size:29.6px;line-height:29.6px;font-weight:400;color:#394259;letter-spacing:-1.253px;-webkit-text-stroke-width:0.3px;">NEW_APPLICATION_</div>
<div class="t" id="r0_fname" style="left:771.60px;top:526.94px;font-size:29.6px;line-height:29.6px;font-weight:400;color:#394259;letter-spacing:-0.040px;-webkit-text-stroke-width:0.3px;">Year_Quarter_Inquiry_Difference</div>
<div class="t" id="r0_user" style="left:323.00px;top:587.39px;font-size:25.4px;line-height:25.4px;font-weight:400;color:#2f3850;letter-spacing:0.000px;-webkit-text-stroke-width:0.3px;">Xavier Conort</div>
<div class="t" id="r0_req" style="left:563.90px;top:587.39px;font-size:25.4px;line-height:25.4px;font-weight:400;color:#2f3850;letter-spacing:0.000px;-webkit-text-stroke-width:0.3px;">Requested a minute ago</div>
<div class="t" id="r0_zero" style="left:2015.20px;top:478.64px;font-size:29.6px;line-height:29.6px;font-weight:400;color:#0c1633;letter-spacing:0.000px;-webkit-text-stroke-width:0.3px;">0</div>
<div class="t" id="r0_passed" style="left:2370.60px;top:479.14px;font-size:29.6px;line-height:29.6px;font-weight:400;color:#2e7d32;letter-spacing:-0.200px;-webkit-text-stroke-width:0.3px;">Passed</div>
<div class="t" id="r0_draft" style="left:2571.20px;top:479.14px;font-size:29.6px;line-height:29.6px;font-weight:400;color:#808080;letter-spacing:0.250px;-webkit-text-stroke-width:0.3px;">Draft</div>
<div class="t" id="r0_rr" style="left:2938.70px;top:485.04px;font-size:29.6px;line-height:29.6px;font-weight:400;color:#3a78f2;letter-spacing:-0.308px;-webkit-text-stroke-width:0.3px;">Request Review</div>
<div class="t" id="r0_cr" style="left:2939.50px;top:549.24px;font-size:29.6px;line-height:29.6px;font-weight:400;color:#3a78f2;letter-spacing:-0.250px;-webkit-text-stroke-width:0.3px;">Close Request</div>
<div class="t" id="r1_title" style="left:289.90px;top:668.40px;font-size:33.9px;line-height:33.9px;font-weight:700;color:#0c1633;letter-spacing:-1.042px;">Feature Promotion Request</div>
<div class="t" id="r1_flabel" style="left:290.10px;top:719.94px;font-size:29.6px;line-height:29.6px;font-weight:400;color:#394259;letter-spacing:-0.183px;-webkit-text-stroke-width:0.3px;">Feature Name:</div>
<div class="t" id="r1_fpre" style="left:493.00px;top:719.94px;font-size:29.6px;line-height:29.6px;font-weight:400;color:#394259;letter-spacing:-1.253px;-webkit-text-stroke-width:0.3px;">NEW_APPLICATION_</div>
<div class="t" id="r1_fname" style="left:769.60px;top:719.94px;font-size:29.6px;line-height:29.6px;font-weight:400;color:#394259;letter-spacing:-1.529px;-webkit-text-stroke-width:0.3px;">REG_CITY_NOT_LIVE_CITY</div>
<div class="t" id="r1_user" style="left:323.00px;top:780.39px;font-size:25.4px;line-height:25.4px;font-weight:400;color:#2f3850;letter-spacing:0.000px;-webkit-text-stroke-width:0.3px;">Xavier Conort</div>
<div class="t" id="r1_req" style="left:563.90px;top:780.39px;font-size:25.4px;line-height:25.4px;font-weight:400;color:#2f3850;letter-spacing:0.000px;-webkit-text-stroke-width:0.3px;">Requested a minute ago</div>
<div class="t" id="r1_zero" style="left:2015.20px;top:671.64px;font-size:29.6px;line-height:29.6px;font-weight:400;color:#0c1633;letter-spacing:0.000px;-webkit-text-stroke-width:0.3px;">0</div>
<div class="t" id="r1_passed" style="left:2370.60px;top:672.14px;font-size:29.6px;line-height:29.6px;font-weight:400;color:#2e7d32;letter-spacing:-0.200px;-webkit-text-stroke-width:0.3px;">Passed</div>
<div class="t" id="r1_draft" style="left:2571.20px;top:672.14px;font-size:29.6px;line-height:29.6px;font-weight:400;color:#808080;letter-spacing:0.250px;-webkit-text-stroke-width:0.3px;">Draft</div>
<div class="t" id="r1_rr" style="left:2938.70px;top:678.04px;font-size:29.6px;line-height:29.6px;font-weight:400;color:#3a78f2;letter-spacing:-0.308px;-webkit-text-stroke-width:0.3px;">Request Review</div>
<div class="t" id="r1_cr" style="left:2939.50px;top:742.24px;font-size:29.6px;line-height:29.6px;font-weight:400;color:#3a78f2;letter-spacing:-0.250px;-webkit-text-stroke-width:0.3px;">Close Request</div>
<div class="t" id="r2_title" style="left:289.90px;top:860.40px;font-size:33.9px;line-height:33.9px;font-weight:700;color:#0c1633;letter-spacing:-1.042px;">Feature Promotion Request</div>
<div class="t" id="r2_flabel" style="left:290.10px;top:911.94px;font-size:29.6px;line-height:29.6px;font-weight:400;color:#394259;letter-spacing:-0.183px;-webkit-text-stroke-width:0.3px;">Feature Name:</div>
<div class="t" id="r2_fpre" style="left:493.00px;top:911.94px;font-size:29.6px;line-height:29.6px;font-weight:400;color:#394259;letter-spacing:-1.253px;-webkit-text-stroke-width:0.3px;">NEW_APPLICATION_</div>
<div class="t" id="r2_fname" style="left:769.60px;top:911.94px;font-size:29.6px;line-height:29.6px;font-weight:400;color:#394259;letter-spacing:-1.442px;-webkit-text-stroke-width:0.3px;">REGION_RATING_CLIENT_W_CITY</div>
<div class="t" id="r2_user" style="left:323.00px;top:972.39px;font-size:25.4px;line-height:25.4px;font-weight:400;color:#2f3850;letter-spacing:0.000px;-webkit-text-stroke-width:0.3px;">Xavier Conort</div>
<div class="t" id="r2_req" style="left:563.90px;top:972.39px;font-size:25.4px;line-height:25.4px;font-weight:400;color:#2f3850;letter-spacing:0.000px;-webkit-text-stroke-width:0.3px;">Requested a minute ago</div>
<div class="t" id="r2_zero" style="left:2015.20px;top:863.64px;font-size:29.6px;line-height:29.6px;font-weight:400;color:#0c1633;letter-spacing:0.000px;-webkit-text-stroke-width:0.3px;">0</div>
<div class="t" id="r2_passed" style="left:2370.60px;top:864.14px;font-size:29.6px;line-height:29.6px;font-weight:400;color:#2e7d32;letter-spacing:-0.200px;-webkit-text-stroke-width:0.3px;">Passed</div>
<div class="t" id="r2_draft" style="left:2571.20px;top:864.14px;font-size:29.6px;line-height:29.6px;font-weight:400;color:#808080;letter-spacing:0.250px;-webkit-text-stroke-width:0.3px;">Draft</div>
<div class="t" id="r2_rr" style="left:2938.70px;top:870.04px;font-size:29.6px;line-height:29.6px;font-weight:400;color:#3a78f2;letter-spacing:-0.308px;-webkit-text-stroke-width:0.3px;">Request Review</div>
<div class="t" id="r2_cr" style="left:2939.50px;top:934.24px;font-size:29.6px;line-height:29.6px;font-weight:400;color:#3a78f2;letter-spacing:-0.250px;-webkit-text-stroke-width:0.3px;">Close Request</div>
<div class="t" id="r3_title" style="left:289.90px;top:1052.40px;font-size:33.9px;line-height:33.9px;font-weight:700;color:#0c1633;letter-spacing:-1.042px;">Feature Promotion Request</div>
<div class="t" id="r3_flabel" style="left:290.10px;top:1103.94px;font-size:29.6px;line-height:29.6px;font-weight:400;color:#394259;letter-spacing:-0.183px;-webkit-text-stroke-width:0.3px;">Feature Name:</div>
<div class="t" id="r3_fpre" style="left:493.00px;top:1103.94px;font-size:29.6px;line-height:29.6px;font-weight:400;color:#394259;letter-spacing:-1.253px;-webkit-text-stroke-width:0.3px;">NEW_APPLICATION_</div>
<div class="t" id="r3_fname" style="left:769.60px;top:1103.94px;font-size:29.6px;line-height:29.6px;font-weight:400;color:#394259;letter-spacing:-1.300px;-webkit-text-stroke-width:0.3px;">REGION_POPULATION_RELATIVE</div>
<div class="t" id="r3_user" style="left:323.00px;top:1164.39px;font-size:25.4px;line-height:25.4px;font-weight:400;color:#2f3850;letter-spacing:0.000px;-webkit-text-stroke-width:0.3px;">Xavier Conort</div>
<div class="t" id="r3_req" style="left:563.90px;top:1164.39px;font-size:25.4px;line-height:25.4px;font-weight:400;color:#2f3850;letter-spacing:0.000px;-webkit-text-stroke-width:0.3px;">Requested a minute ago</div>
<div class="t" id="r3_zero" style="left:2015.20px;top:1055.64px;font-size:29.6px;line-height:29.6px;font-weight:400;color:#0c1633;letter-spacing:0.000px;-webkit-text-stroke-width:0.3px;">0</div>
<div class="t" id="r3_passed" style="left:2370.60px;top:1056.14px;font-size:29.6px;line-height:29.6px;font-weight:400;color:#2e7d32;letter-spacing:-0.200px;-webkit-text-stroke-width:0.3px;">Passed</div>
<div class="t" id="r3_draft" style="left:2571.20px;top:1056.14px;font-size:29.6px;line-height:29.6px;font-weight:400;color:#808080;letter-spacing:0.250px;-webkit-text-stroke-width:0.3px;">Draft</div>
<div class="t" id="r3_rr" style="left:2938.70px;top:1062.04px;font-size:29.6px;line-height:29.6px;font-weight:400;color:#3a78f2;letter-spacing:-0.308px;-webkit-text-stroke-width:0.3px;">Request Review</div>
<div class="t" id="r3_cr" style="left:2939.50px;top:1126.24px;font-size:29.6px;line-height:29.6px;font-weight:400;color:#3a78f2;letter-spacing:-0.250px;-webkit-text-stroke-width:0.3px;">Close Request</div>
<div class="t" id="r4_title" style="left:289.90px;top:1245.40px;font-size:33.9px;line-height:33.9px;font-weight:700;color:#0c1633;letter-spacing:-1.042px;">Feature Promotion Request</div>
<div class="t" id="r4_flabel" style="left:290.10px;top:1296.94px;font-size:29.6px;line-height:29.6px;font-weight:400;color:#394259;letter-spacing:-0.183px;-webkit-text-stroke-width:0.3px;">Feature Name:</div>
<div class="t" id="r4_fpre" style="left:493.00px;top:1296.94px;font-size:29.6px;line-height:29.6px;font-weight:400;color:#394259;letter-spacing:-1.253px;-webkit-text-stroke-width:0.3px;">NEW_APPLICATION_</div>
<div class="t" id="r4_fname" style="left:770.60px;top:1296.94px;font-size:29.6px;line-height:29.6px;font-weight:400;color:#394259;letter-spacing:-2.100px;-webkit-text-stroke-width:0.3px;">OWN_CAR_AGE</div>
<div class="t" id="r4_user" style="left:323.00px;top:1357.39px;font-size:25.4px;line-height:25.4px;font-weight:400;color:#2f3850;letter-spacing:0.000px;-webkit-text-stroke-width:0.3px;">Xavier Conort</div>
<div class="t" id="r4_req" style="left:563.90px;top:1357.39px;font-size:25.4px;line-height:25.4px;font-weight:400;color:#2f3850;letter-spacing:0.000px;-webkit-text-stroke-width:0.3px;">Requested a minute ago</div>
<div class="t" id="r4_zero" style="left:2015.20px;top:1248.64px;font-size:29.6px;line-height:29.6px;font-weight:400;color:#0c1633;letter-spacing:0.000px;-webkit-text-stroke-width:0.3px;">0</div>
<div class="t" id="r4_passed" style="left:2370.60px;top:1249.14px;font-size:29.6px;line-height:29.6px;font-weight:400;color:#2e7d32;letter-spacing:-0.200px;-webkit-text-stroke-width:0.3px;">Passed</div>
<div class="t" id="r4_draft" style="left:2571.20px;top:1249.14px;font-size:29.6px;line-height:29.6px;font-weight:400;color:#808080;letter-spacing:0.250px;-webkit-text-stroke-width:0.3px;">Draft</div>
<div class="t" id="r4_rr" style="left:2938.70px;top:1255.04px;font-size:29.6px;line-height:29.6px;font-weight:400;color:#3a78f2;letter-spacing:-0.308px;-webkit-text-stroke-width:0.3px;">Request Review</div>
<div class="t" id="r4_cr" style="left:2939.50px;top:1319.24px;font-size:29.6px;line-height:29.6px;font-weight:400;color:#3a78f2;letter-spacing:-0.250px;-webkit-text-stroke-width:0.3px;">Close Request</div>
<div class="t" id="r5_title" style="left:289.90px;top:1437.40px;font-size:33.9px;line-height:33.9px;font-weight:700;color:#0c1633;letter-spacing:-1.042px;">Feature Promotion Request</div>
<div class="t" id="r5_flabel" style="left:290.10px;top:1488.94px;font-size:29.6px;line-height:29.6px;font-weight:400;color:#394259;letter-spacing:-0.183px;-webkit-text-stroke-width:0.3px;">Feature Name:</div>
<div class="t" id="r5_fpre" style="left:493.00px;top:1488.94px;font-size:29.6px;line-height:29.6px;font-weight:400;color:#394259;letter-spacing:-1.253px;-webkit-text-stroke-width:0.3px;">NEW_APPLICATION_</div>
<div class="t" id="r5_fname" style="left:769.60px;top:1488.94px;font-size:29.6px;line-height:29.6px;font-weight:400;color:#394259;letter-spacing:-1.142px;-webkit-text-stroke-width:0.3px;">FLOORSMAX_AVG</div>
<div class="t" id="r5_user" style="left:323.00px;top:1549.39px;font-size:25.4px;line-height:25.4px;font-weight:400;color:#2f3850;letter-spacing:0.000px;-webkit-text-stroke-width:0.3px;">Xavier Conort</div>
<div class="t" id="r5_req" style="left:563.90px;top:1549.39px;font-size:25.4px;line-height:25.4px;font-weight:400;color:#2f3850;letter-spacing:0.000px;-webkit-text-stroke-width:0.3px;">Requested a minute ago</div>
<div class="t" id="r5_zero" style="left:2015.20px;top:1440.64px;font-size:29.6px;line-height:29.6px;font-weight:400;color:#0c1633;letter-spacing:0.000px;-webkit-text-stroke-width:0.3px;">0</div>
<div class="t" id="r5_passed" style="left:2370.60px;top:1441.14px;font-size:29.6px;line-height:29.6px;font-weight:400;color:#2e7d32;letter-spacing:-0.200px;-webkit-text-stroke-width:0.3px;">Passed</div>
<div class="t" id="r5_draft" style="left:2571.20px;top:1441.14px;font-size:29.6px;line-height:29.6px;font-weight:400;color:#808080;letter-spacing:0.250px;-webkit-text-stroke-width:0.3px;">Draft</div>
<div class="t" id="r5_rr" style="left:2938.70px;top:1447.04px;font-size:29.6px;line-height:29.6px;font-weight:400;color:#3a78f2;letter-spacing:-0.308px;-webkit-text-stroke-width:0.3px;">Request Review</div>
<div class="t" id="r5_cr" style="left:2939.50px;top:1511.24px;font-size:29.6px;line-height:29.6px;font-weight:400;color:#3a78f2;letter-spacing:-0.250px;-webkit-text-stroke-width:0.3px;">Close Request</div>
<div class="t" id="r6_title" style="left:289.90px;top:1630.40px;font-size:33.9px;line-height:33.9px;font-weight:700;color:#0c1633;letter-spacing:-1.042px;">Feature Promotion Request</div>
<div class="t" id="r6_flabel" style="left:290.10px;top:1681.94px;font-size:29.6px;line-height:29.6px;font-weight:400;color:#394259;letter-spacing:-0.183px;-webkit-text-stroke-width:0.3px;">Feature Name:</div>
<div class="t" id="r6_fpre" style="left:493.00px;top:1681.94px;font-size:29.6px;line-height:29.6px;font-weight:400;color:#394259;letter-spacing:-1.253px;-webkit-text-stroke-width:0.3px;">NEW_APPLICATION_</div>
<div class="t" id="r6_fname" style="left:769.60px;top:1681.94px;font-size:29.6px;line-height:29.6px;font-weight:400;color:#394259;letter-spacing:-1.307px;-webkit-text-stroke-width:0.3px;">FLAG_DOCUMENT_3</div>
<div class="t" id="r6_user" style="left:323.00px;top:1742.39px;font-size:25.4px;line-height:25.4px;font-weight:400;color:#2f3850;letter-spacing:0.000px;-webkit-text-stroke-width:0.3px;">Xavier Conort</div>
<div class="t" id="r6_req" style="left:563.90px;top:1742.39px;font-size:25.4px;line-height:25.4px;font-weight:400;color:#2f3850;letter-spacing:0.000px;-webkit-text-stroke-width:0.3px;">Requested a minute ago</div>
<div class="t" id="r6_zero" style="left:2015.20px;top:1633.64px;font-size:29.6px;line-height:29.6px;font-weight:400;color:#0c1633;letter-spacing:0.000px;-webkit-text-stroke-width:0.3px;">0</div>
<div class="t" id="r6_passed" style="left:2370.60px;top:1634.14px;font-size:29.6px;line-height:29.6px;font-weight:400;color:#2e7d32;letter-spacing:-0.200px;-webkit-text-stroke-width:0.3px;">Passed</div>
<div class="t" id="r6_draft" style="left:2571.20px;top:1634.14px;font-size:29.6px;line-height:29.6px;font-weight:400;color:#808080;letter-spacing:0.250px;-webkit-text-stroke-width:0.3px;">Draft</div>
<div class="t" id="r6_rr" style="left:2938.70px;top:1640.04px;font-size:29.6px;line-height:29.6px;font-weight:400;color:#3a78f2;letter-spacing:-0.308px;-webkit-text-stroke-width:0.3px;">Request Review</div>
<div class="t" id="r6_cr" style="left:2939.50px;top:1704.24px;font-size:29.6px;line-height:29.6px;font-weight:400;color:#3a78f2;letter-spacing:-0.250px;-webkit-text-stroke-width:0.3px;">Close Request</div>
<div class="t" id="r7_title" style="left:289.90px;top:1822.40px;font-size:33.9px;line-height:33.9px;font-weight:700;color:#0c1633;letter-spacing:-1.042px;">Feature Promotion Request</div>
<div class="t" id="r7_flabel" style="left:290.10px;top:1873.94px;font-size:29.6px;line-height:29.6px;font-weight:400;color:#394259;letter-spacing:-0.183px;-webkit-text-stroke-width:0.3px;">Feature Name:</div>
<div class="t" id="r7_fpre" style="left:493.00px;top:1873.94px;font-size:29.6px;line-height:29.6px;font-weight:400;color:#394259;letter-spacing:-1.253px;-webkit-text-stroke-width:0.3px;">NEW_APPLICATION_</div>
<div class="t" id="r7_fname" style="left:769.60px;top:1873.94px;font-size:29.6px;line-height:29.6px;font-weight:400;color:#394259;letter-spacing:-1.973px;-webkit-text-stroke-width:0.3px;">EXT_SOURCE_3</div>
<div class="t" id="r7_user" style="left:323.00px;top:1934.39px;font-size:25.4px;line-height:25.4px;font-weight:400;color:#2f3850;letter-spacing:0.000px;-webkit-text-stroke-width:0.3px;">Xavier Conort</div>
<div class="t" id="r7_req" style="left:563.90px;top:1934.39px;font-size:25.4px;line-height:25.4px;font-weight:400;color:#2f3850;letter-spacing:0.000px;-webkit-text-stroke-width:0.3px;">Requested a minute ago</div>
<div class="t" id="r7_zero" style="left:2015.20px;top:1825.64px;font-size:29.6px;line-height:29.6px;font-weight:400;color:#0c1633;letter-spacing:0.000px;-webkit-text-stroke-width:0.3px;">0</div>
<div class="t" id="r7_passed" style="left:2370.60px;top:1826.14px;font-size:29.6px;line-height:29.6px;font-weight:400;color:#2e7d32;letter-spacing:-0.200px;-webkit-text-stroke-width:0.3px;">Passed</div>
<div class="t" id="r7_draft" style="left:2571.20px;top:1826.14px;font-size:29.6px;line-height:29.6px;font-weight:400;color:#808080;letter-spacing:0.250px;-webkit-text-stroke-width:0.3px;">Draft</div>
<div class="t" id="r7_rr" style="left:2938.70px;top:1832.04px;font-size:29.6px;line-height:29.6px;font-weight:400;color:#3a78f2;letter-spacing:-0.308px;-webkit-text-stroke-width:0.3px;">Request Review</div>
<div class="t" id="r7_cr" style="left:2939.50px;top:1896.24px;font-size:29.6px;line-height:29.6px;font-weight:400;color:#3a78f2;letter-spacing:-0.250px;-webkit-text-stroke-width:0.3px;">Close Request</div>
<div class="t" id="results" style="left:206.20px;top:2018.77px;font-size:24.6px;line-height:24.6px;font-weight:400;color:#0c1633;letter-spacing:0.470px;-webkit-text-stroke:0.65px #0c1633;">Results: 1 - 90 of 90</div>
<div class="t" id="rpp" style="left:2782.00px;top:2018.57px;font-size:24.6px;line-height:24.6px;font-weight:400;color:#0c1633;letter-spacing:0.600px;-webkit-text-stroke:0.65px #0c1633;">Rows per page:</div>
<div class="t" id="sel100" style="left:3013.90px;top:2019.37px;font-size:22px;line-height:22px;font-weight:400;color:#0c1633;letter-spacing:-1.500px;-webkit-text-stroke-width:0.3px;">100</div>
<div class="t" id="pg1" style="left:3265.00px;top:2017.39px;font-size:25.4px;line-height:25.4px;font-weight:400;color:#ffffff;letter-spacing:0.000px;-webkit-text-stroke-width:0.6px;">1</div>
</body></html>
